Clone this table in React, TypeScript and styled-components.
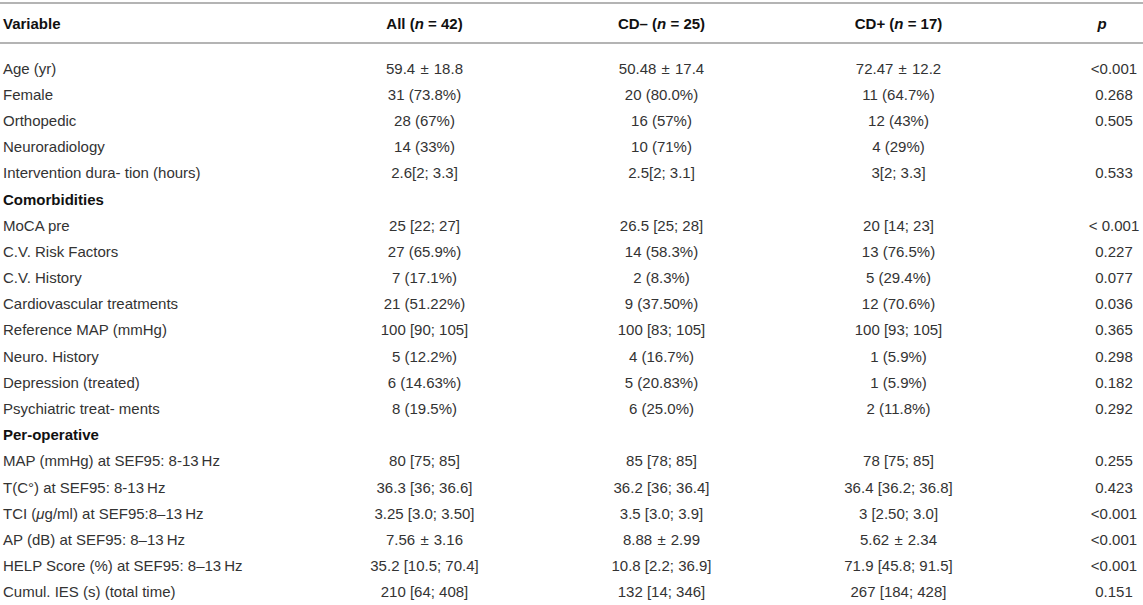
import styled, { createGlobalStyle } from 'styled-components';

// rows of the table; section rows have no values
type Row = {
    label: React.ReactNode
    all?: string
    neg?: string
    pos?: string
    p?: string
    section?: boolean
}

const rows: Row[] = [
    { label: 'Age (yr)', all: '59.4 ± 18.8', neg: '50.48 ± 17.4', pos: '72.47 ± 12.2', p: '<0.001' },
    { label: 'Female', all: '31 (73.8%)', neg: '20 (80.0%)', pos: '11 (64.7%)', p: '0.268' },
    { label: 'Orthopedic', all: '28 (67%)', neg: '16 (57%)', pos: '12 (43%)', p: '0.505' },
    { label: 'Neuroradiology', all: '14 (33%)', neg: '10 (71%)', pos: '4 (29%)', p: '' },
    { label: 'Intervention dura- tion (hours)', all: '2.6[2; 3.3]', neg: '2.5[2; 3.1]', pos: '3[2; 3.3]', p: '0.533' },
    { label: 'Comorbidities', section: true },
    { label: 'MoCA pre', all: '25 [22; 27]', neg: '26.5 [25; 28]', pos: '20 [14; 23]', p: '< 0.001' },
    { label: 'C.V. Risk Factors', all: '27 (65.9%)', neg: '14 (58.3%)', pos: '13 (76.5%)', p: '0.227' },
    { label: 'C.V. History', all: '7 (17.1%)', neg: '2 (8.3%)', pos: '5 (29.4%)', p: '0.077' },
    { label: 'Cardiovascular treatments', all: '21 (51.22%)', neg: '9 (37.50%)', pos: '12 (70.6%)', p: '0.036' },
    { label: 'Reference MAP (mmHg)', all: '100 [90; 105]', neg: '100 [83; 105]', pos: '100 [93; 105]', p: '0.365' },
    { label: 'Neuro. History', all: '5 (12.2%)', neg: '4 (16.7%)', pos: '1 (5.9%)', p: '0.298' },
    { label: 'Depression (treated)', all: '6 (14.63%)', neg: '5 (20.83%)', pos: '1 (5.9%)', p: '0.182' },
    { label: 'Psychiatric treat- ments', all: '8 (19.5%)', neg: '6 (25.0%)', pos: '2 (11.8%)', p: '0.292' },
    { label: 'Per-operative', section: true },
    { label: 'MAP (mmHg) at SEF95: 8-13\u2009Hz', all: '80 [75; 85]', neg: '85 [78; 85]', pos: '78 [75; 85]', p: '0.255' },
    { label: 'T(C°) at SEF95: 8-13\u2009Hz', all: '36.3 [36; 36.6]', neg: '36.2 [36; 36.4]', pos: '36.4 [36.2; 36.8]', p: '0.423' },
    { label: <>TCI (<i>μ</i>g/ml) at SEF95:8–13{'\u2009'}Hz</>, all: '3.25 [3.0; 3.50]', neg: '3.5 [3.0; 3.9]', pos: '3 [2.50; 3.0]', p: '<0.001' },
    { label: 'AP (dB) at SEF95: 8–13\u2009Hz', all: '7.56 ± 3.16', neg: '8.88 ± 2.99', pos: '5.62 ± 2.34', p: '<0.001' },
    { label: 'HELP Score (%) at SEF95: 8–13\u2009Hz', all: '35.2 [10.5; 70.4]', neg: '10.8 [2.2; 36.9]', pos: '71.9 [45.8; 91.5]', p: '<0.001' },
    { label: 'Cumul. IES (s) (total time)', all: '210 [64; 408]', neg: '132 [14; 346]', pos: '267 [184; 428]', p: '0.151' },
]

const GlobalStyle = createGlobalStyle`
    body {
        margin: 0;
        background: #ffffff;
    }
`;

const Table = styled.div`
    width: 1143px;
    padding-top: 2px;
    font-family: "Liberation Sans", Arial, sans-serif;
    font-size: 15px;
    color: #333333;
`;

const HeadRow = styled.div`
    display: grid;
    grid-template-columns: 306px 237px 237px 237px 1fr;
    align-items: center;
    height: 38px;
    border-top: 2px solid #b4b4b4;
    border-bottom: 2px solid #b4b4b4;
    font-weight: bold;
    color: #111111;
`;

const Body = styled.div`
    padding-top: 11px;
`;

const BodyRow = styled.div`
    display: grid;
    grid-template-columns: 306px 237px 237px 237px 1fr;
    align-items: center;
    height: 26.2px;
`;

const Cell = styled.div<{ $align?: 'left' | 'center'; $padLeft?: number }>`
    text-align: ${p => p.$align || 'center'};
    padding-left: ${p => p.$padLeft ?? 0}px;
    white-space: nowrap;
`;

const Label = styled(Cell)<{ $section?: boolean }>`
    padding-left: 3px;
    font-weight: ${p => p.$section ? 'bold' : 'normal'};
    color: ${p => p.$section ? '#111111' : '#333333'};
`;

// the ± sign sits a little wider in the source
const Op = styled.span`
    margin: 0 1px;
`;

const withOps = (text?: string) => {
    if (!text || !text.includes('±')) return text
    const [a, b] = text.split('±')
    return <>{a}<Op>±</Op>{b}</>
}

const App = () => {
    return (
        <>
            <GlobalStyle />
            <Table>
                <HeadRow>
                    <Cell $align="left" $padLeft={3}>Variable</Cell>
                    <Cell>All (<i>n</i> = 42)</Cell>
                    <Cell>CD– (<i>n</i> = 25)</Cell>
                    <Cell>CD+ (<i>n</i> = 17)</Cell>
                    <Cell $padLeft={44}><i>p</i></Cell>
                </HeadRow>
                <Body>
                    {rows.map((row, i) => (
                        <BodyRow key={i}>
                            <Label $align="left" $section={row.section}>{row.label}</Label>
                            <Cell>{withOps(row.all)}</Cell>
                            <Cell>{withOps(row.neg)}</Cell>
                            <Cell>{withOps(row.pos)}</Cell>
                            <Cell $padLeft={68}>{row.p}</Cell>
                        </BodyRow>
                    ))}
                </Body>
            </Table>
        </>
    )
}

export default App
